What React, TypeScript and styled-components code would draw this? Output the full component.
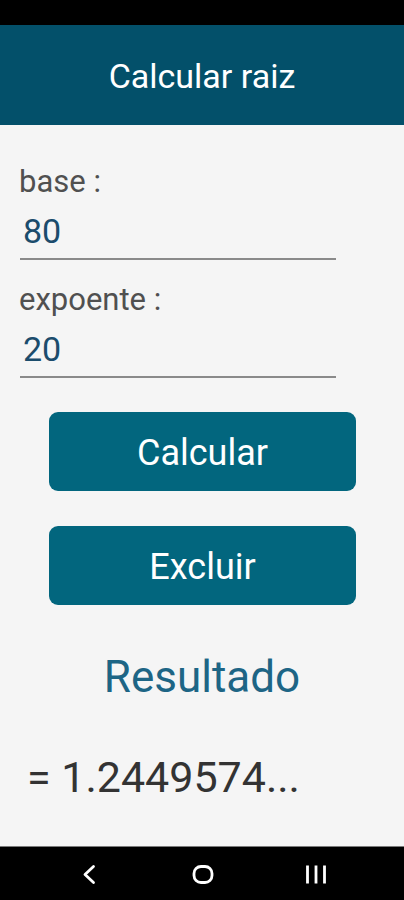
import React from "react";
import styled, { createGlobalStyle } from "styled-components";

const Global = createGlobalStyle`
  html, body { margin: 0; padding: 0; background: #f5f5f5; }
  body { font-family: Roboto, "Noto Sans", sans-serif; }
  * { box-sizing: border-box; }
`;

const Screen = styled.div`
  width: 404px;
  height: 900px;
  display: flex;
  flex-direction: column;
  background: #f5f5f5;
`;

const StatusBar = styled.div`
  height: 25px;
  background: #000;
  flex-shrink: 0;
`;

const Header = styled.header`
  height: 100px;
  background: #03506a;
  display: flex;
  align-items: center;
  justify-content: center;
  color: #fff;
  font-size: 34px;
  padding-top: 2px;
  flex-shrink: 0;
`;

const Content = styled.main`
  flex: 1;
  display: flex;
  flex-direction: column;
  padding: 39px 0 0 19px;
`;

const Label = styled.div`
  color: #505050;
  font-size: 31px;
  line-height: 36px;
`;

const Field = styled.div`
  width: 316px;
  margin: 11px 0 22px 1px;
  padding: 0 0 7px 3px;
  border-bottom: 2px solid #8a8a8a;
  color: #1b4c6c;
  font-size: 34px;
  line-height: 40px;
`;

const Buttons = styled.div`
  display: flex;
  flex-direction: column;
  gap: 35px;
  margin: 12px 0 0 30px;
`;

const Button = styled.button`
  width: 307px;
  height: 79px;
  border: none;
  border-radius: 9px;
  background: #02667e;
  color: #fff;
  font-family: Roboto, sans-serif;
  font-size: 36px;
  padding: 2px 0 0;
`;

const ResultTitle = styled.div`
  margin: 46px 0 0 -19px;
  text-align: center;
  color: #1d6585;
  font-size: 44px;
  line-height: 52px;
`;

const ResultValue = styled.div`
  margin: 49px 0 0 8px;
  color: #333;
  font-size: 43px;
  line-height: 50px;
`;

const NavBar = styled.nav`
  height: 54px;
  background: #000;
  border-top: 1px solid #7a7a7a;
  display: flex;
  align-items: center;
  justify-content: space-between;
  padding: 0 76px 0 77px;
  flex-shrink: 0;
`;

const NavIcon = styled.svg`
  width: 24px;
  height: 24px;
`;

export default function App() {
  return (
    <Screen>
      <Global />
      <StatusBar />
      <Header>Calcular raiz</Header>
      <Content>
        <Label>base :</Label>
        <Field>80</Field>
        <Label>expoente :</Label>
        <Field>20</Field>
        <Buttons>
          <Button>Calcular</Button>
          <Button>Excluir</Button>
        </Buttons>
        <ResultTitle>Resultado</ResultTitle>
        <ResultValue>= 1.2449574...</ResultValue>
      </Content>
      <NavBar>
        <NavIcon viewBox="0 0 24 24">
          <path d="M16.5 4.5 L8 12.5 L16.5 20.5" stroke="#fff" strokeWidth="2.8" fill="none" strokeLinecap="round" strokeLinejoin="round" />
        </NavIcon>
        <NavIcon viewBox="0 0 24 24">
          <rect x="3" y="4.5" width="18" height="16" rx="7" stroke="#fff" strokeWidth="2.8" fill="none" />
        </NavIcon>
        <NavIcon viewBox="0 0 24 24">
          <path d="M3.5 3.5 V21.5 M12 3.5 V21.5 M20.5 3.5 V21.5" stroke="#fff" strokeWidth="2.8" />
        </NavIcon>
      </NavBar>
    </Screen>
  );
}
